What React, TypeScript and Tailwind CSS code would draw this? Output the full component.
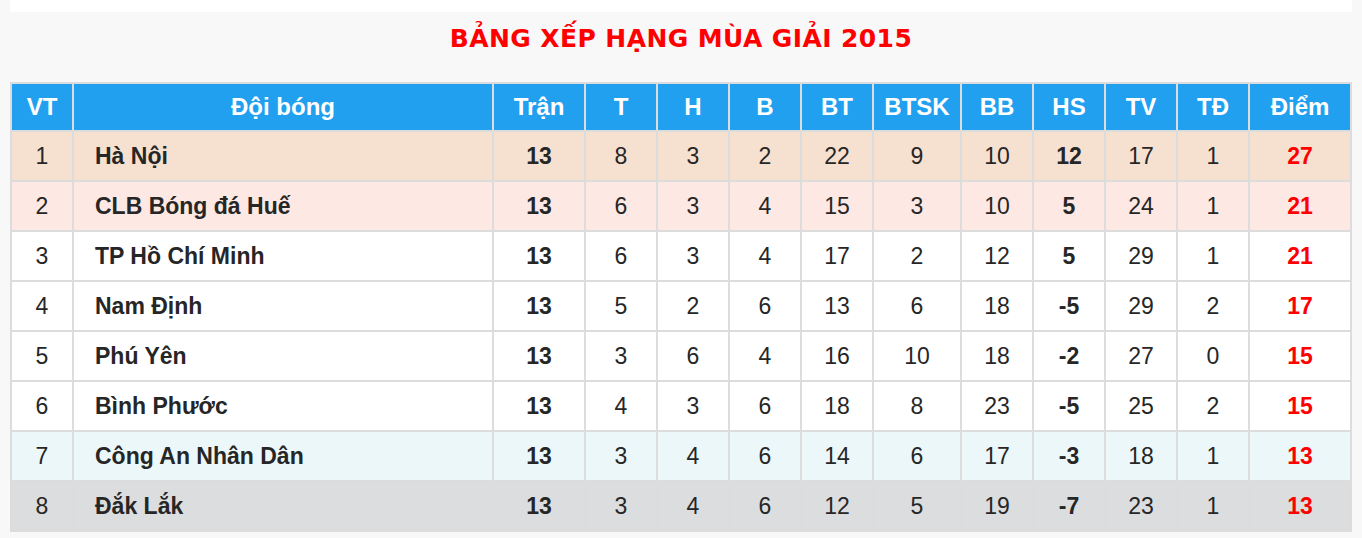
import React from "react";

type Row = {
  vt: number;
  name: string;
  tran: number;
  t: number;
  h: number;
  b: number;
  bt: number;
  btsk: number;
  bb: number;
  hs: number;
  tv: number;
  td: number;
  diem: number;
  bg: string;
};

const rows: Row[] = [
  { vt: 1, name: "Hà Nội", tran: 13, t: 8, h: 3, b: 2, bt: 22, btsk: 9, bb: 10, hs: 12, tv: 17, td: 1, diem: 27, bg: "bg-[#f6e1d1]" },
  { vt: 2, name: "CLB Bóng đá Huế", tran: 13, t: 6, h: 3, b: 4, bt: 15, btsk: 3, bb: 10, hs: 5, tv: 24, td: 1, diem: 21, bg: "bg-[#fde8e3]" },
  { vt: 3, name: "TP Hồ Chí Minh", tran: 13, t: 6, h: 3, b: 4, bt: 17, btsk: 2, bb: 12, hs: 5, tv: 29, td: 1, diem: 21, bg: "bg-white" },
  { vt: 4, name: "Nam Định", tran: 13, t: 5, h: 2, b: 6, bt: 13, btsk: 6, bb: 18, hs: -5, tv: 29, td: 2, diem: 17, bg: "bg-white" },
  { vt: 5, name: "Phú Yên", tran: 13, t: 3, h: 6, b: 4, bt: 16, btsk: 10, bb: 18, hs: -2, tv: 27, td: 0, diem: 15, bg: "bg-white" },
  { vt: 6, name: "Bình Phước", tran: 13, t: 4, h: 3, b: 6, bt: 18, btsk: 8, bb: 23, hs: -5, tv: 25, td: 2, diem: 15, bg: "bg-white" },
  { vt: 7, name: "Công An Nhân Dân", tran: 13, t: 3, h: 4, b: 6, bt: 14, btsk: 6, bb: 17, hs: -3, tv: 18, td: 1, diem: 13, bg: "bg-[#ecf7fa]" },
  { vt: 8, name: "Đắk Lắk", tran: 13, t: 3, h: 4, b: 6, bt: 12, btsk: 5, bb: 19, hs: -7, tv: 23, td: 1, diem: 13, bg: "bg-[#dcdddf]" },
];

const headers = ["VT", "Đội bóng", "Trận", "T", "H", "B", "BT", "BTSK", "BB", "HS", "TV", "TĐ", "Điểm"];

const gridCols =
  "grid grid-cols-[60px_418px_90px_70px_70px_70px_70px_86px_70px_70px_70px_70px_100px] gap-x-[2px]";

export default function App() {
  return (
    <div className="min-h-[538px] w-[1362px] bg-[#f8f8f8] font-['Liberation_Sans',Arial,sans-serif]">
      <div className="mx-[10px] h-[12px] bg-white" />
      <div className="mx-[10px]">
        <h1 className="flex h-[70px] items-center justify-center pb-[16px] font-['DejaVu_Sans',Verdana,sans-serif] text-[25px] font-bold tracking-[0.4px] text-[#ff0000]">
          BẢNG XẾP HẠNG MÙA GIẢI 2015
        </h1>
        <div className="flex flex-col gap-y-[2px] bg-[#dcdcdc] p-[2px]">
          <div className={`${gridCols} h-[46px]`}>
            {headers.map((h) => (
              <div
                key={h}
                className="flex items-center justify-center bg-[#22a0f0] text-[24px] font-bold text-white"
              >
                {h}
              </div>
            ))}
          </div>
          {rows.map((r) => {
            const cell = `flex items-center justify-center ${r.bg} text-[23px] text-[#262626]`;
            return (
              <div key={r.vt} className={`${gridCols} h-[48px]`}>
                <div className={cell}>{r.vt}</div>
                <div className={`flex items-center ${r.bg} pl-[21px] text-[23px] font-bold text-[#262626]`}>{r.name}</div>
                <div className={`${cell} font-bold`}>{r.tran}</div>
                <div className={cell}>{r.t}</div>
                <div className={cell}>{r.h}</div>
                <div className={cell}>{r.b}</div>
                <div className={cell}>{r.bt}</div>
                <div className={cell}>{r.btsk}</div>
                <div className={cell}>{r.bb}</div>
                <div className={`${cell} font-bold`}>{r.hs}</div>
                <div className={cell}>{r.tv}</div>
                <div className={cell}>{r.td}</div>
                <div className={`flex items-center justify-center ${r.bg} text-[23px] font-bold text-[#ff0000]`}>{r.diem}</div>
              </div>
            );
          })}
        </div>
      </div>
    </div>
  );
}
